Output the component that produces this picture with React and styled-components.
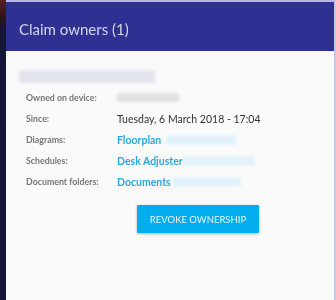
import React from "react";
import styled, { createGlobalStyle } from "styled-components";

const GlobalStyle = createGlobalStyle`
  html, body {
    margin: 0;
    padding: 0;
    width: 336px;
    height: 300px;
    overflow: hidden;
    background: #f3f3f6;
  }
`;

const Page = styled.div`
  display: flex;
  width: 336px;
  height: 300px;
  font-family: Lato, "Open Sans", sans-serif;
`;

const Backdrop = styled.div`
  width: 6px;
  background: linear-gradient(#5a1e1e 0, #2a1515 18px, #16163a 30px, #14143a 100%);
  filter: blur(0.6px);
`;

const Dialog = styled.div`
  flex: 1;
  display: flex;
  flex-direction: column;
  background: #fafafa;
  border-top: 2px solid #b8b8dc;
  border-right: 2px solid #c8c8e4;
`;

const Header = styled.div`
  height: 49px;
  background: #2e3192;
  display: flex;
  align-items: center;
  padding-left: 13px;
  padding-top: 5px;
  box-sizing: border-box;
`;

const Title = styled.h1`
  margin: 0;
  font-size: 15px;
  font-weight: 400;
  color: #d4d5ee;
  filter: blur(0.3px);
`;

const Body = styled.div`
  padding: 19px 0 0 13px;
  display: flex;
  flex-direction: column;
`;

const Blur = styled.div`
  width: ${(p) => p.$w}px;
  height: ${(p) => p.$h || 10}px;
  margin-left: ${(p) => p.$gap || 0}px;
  background: ${(p) => p.$c};
  filter: blur(1.5px);
  border-radius: 2px;
`;

const Details = styled.div`
  display: grid;
  grid-template-columns: 91px 1fr;
  grid-auto-rows: 21px;
  align-items: center;
  margin: 4px 0 0 7px;
  filter: blur(0.35px);
`;

const Label = styled.div`
  font-size: 8.8px;
  font-weight: 700;
  color: #767676;
`;

const Value = styled.div`
  display: flex;
  align-items: center;
  font-size: 10.5px;
  color: ${(p) => (p.$link ? "#2aa9e0" : "#333")};
  font-weight: ${(p) => (p.$link ? 700 : 400)};
  white-space: nowrap;
`;

const ButtonRow = styled.div`
  display: flex;
  padding: 13px 0 0 118px;
`;

const Button = styled.button`
  width: 122px;
  height: 28px;
  border: none;
  border-radius: 1px;
  background: #00aeef;
  color: #e8f7fd;
  font-family: Lato, "Open Sans", sans-serif;
  font-size: 9.5px;
  font-weight: 400;
  box-shadow: 0 1px 3px rgba(0, 0, 0, 0.3);
  filter: blur(0.3px);
`;

export default function App() {
  return (
    <>
      <GlobalStyle />
      <Page>
        <Backdrop />
        <Dialog>
          <Header>
            <Title>Claim owners (1)</Title>
          </Header>
          <Body>
            <Blur $w={136} $h={13} $c="#e4e4ee" />
            <Details>
              <Label>Owned on device:</Label>
              <Value>
                <Blur $w={62} $h={9} $c="#e2e2e2" />
              </Value>
              <Label>Since:</Label>
              <Value>Tuesday, 6 March 2018 - 17:04</Value>
              <Label>Diagrams:</Label>
              <Value $link>
                Floorplan
                <Blur $w={70} $h={10} $gap={5} $c="#e2f2fa" />
              </Value>
              <Label>Schedules:</Label>
              <Value $link>
                Desk Adjuster
                <Blur $w={72} $h={10} $c="#e2f2fa" />
              </Value>
              <Label>Document folders:</Label>
              <Value $link>
                Documents
                <Blur $w={68} $h={10} $gap={2} $c="#e2f2fa" />
              </Value>
            </Details>
            <ButtonRow>
              <Button>REVOKE OWNERSHIP</Button>
            </ButtonRow>
          </Body>
        </Dialog>
      </Page>
    </>
  );
}
